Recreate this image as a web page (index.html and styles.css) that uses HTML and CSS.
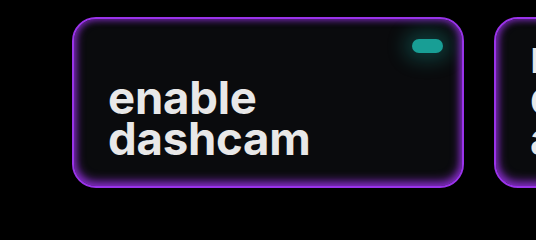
FILE: index.html
```html
<!DOCTYPE html>
<html lang="en">
<head>
    <meta charset="UTF-8">
    <meta name="viewport" content="width=device-width, initial-scale=1.0">
    <title>Toggles</title>
    <link rel="stylesheet" href="styles.css">
</head>
<body>
    <!-- Toggle cards row -->
    <div class="cards">
        <div class="card">
            <span class="pill"></span>
            <p class="label">enable<br>dashcam</p>
        </div>
        <div class="card">
            <span class="pill"></span>
            <p class="label">record<br>dashcam<br>audio</p>
        </div>
    </div>
</body>
</html>
```

FILE: styles.css
```css
body {
    margin: 0;
    background-color: #000000;
    font-family: Inter, 'Noto Sans', sans-serif;
    overflow: hidden;
}

.cards {
    display: flex;
    gap: 30px;
    padding: 17px 0 0 72px;
}

.card {
    position: relative;
    flex: 0 0 392px;
    height: 171px;
    box-sizing: border-box;
    border: 2px solid #9a33ea;
    border-radius: 24px;
    background-color: #0a0b0d;
    box-shadow: inset 0 -3px 10px 2px rgba(146, 48, 220, 0.8), inset 0 0 6px 1px rgba(146, 48, 220, 0.5);
    display: flex;
    flex-direction: column;
    justify-content: flex-end;
    padding: 0 34px 27px 34px;
}

/* Status light in the corner */
.pill {
    position: absolute;
    top: 20px;
    right: 19px;
    width: 31px;
    height: 14px;
    border-radius: 7px;
    background-color: #189e95;
    box-shadow: 0 0 18px 8px rgba(24, 158, 149, 0.3);
}

.label {
    margin: 0;
    color: #e8e8e8;
    font-size: 45.5px;
    font-weight: 700;
    line-height: 41px;
    letter-spacing: -0.2px;
}
```
